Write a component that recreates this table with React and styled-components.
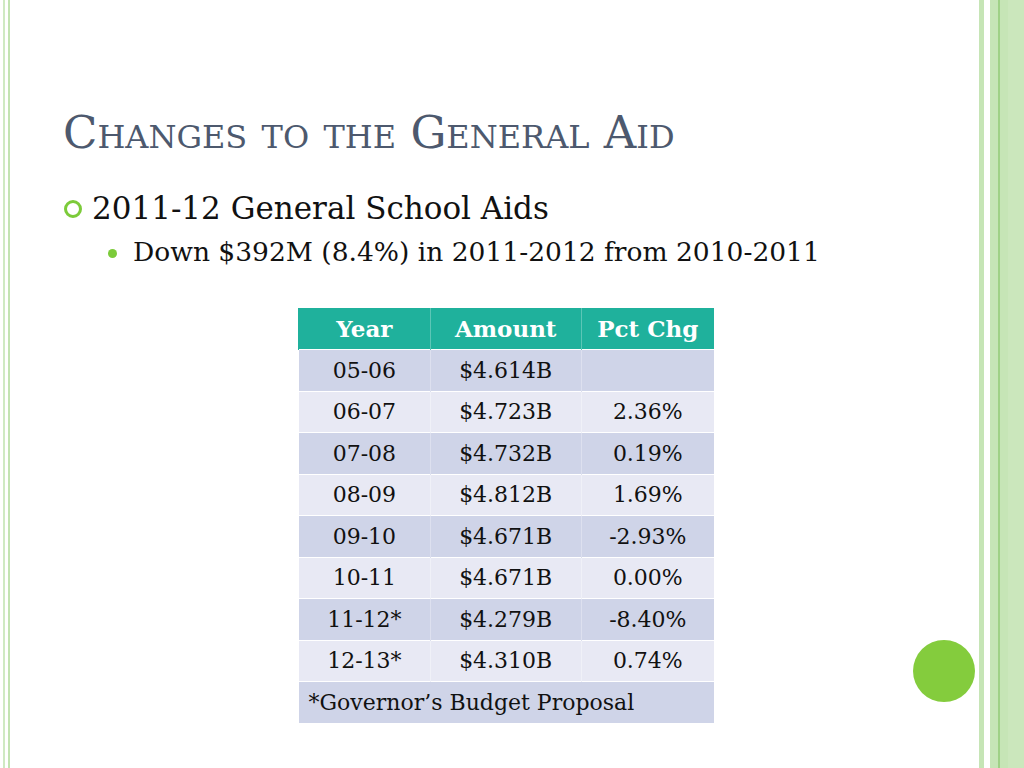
import React from 'react';
import styled, { createGlobalStyle } from 'styled-components';

const GlobalStyle = createGlobalStyle`
  html, body {
    margin: 0;
    padding: 0;
    background: #fff;
  }
  #root {
    width: 1024px;
    height: 768px;
  }
`

const Slide = styled.div`
  position: relative;
  display: flex;
  width: 1024px;
  height: 768px;
  overflow: hidden;
  background: #fff;
  font-family: "DejaVu Serif", "Liberation Serif", serif;
`
const LeftRail = styled.div`
  width: 7px;
  margin-left: 3px;
  border-left: 2px solid #cfe9c2;
  border-right: 2px solid #c3e3b2;
  box-sizing: border-box;
  flex-shrink: 0;
`
const Body = styled.div`
  flex: 1;
  display: flex;
  flex-direction: column;
  padding-left: 53px;
`
const RightRail = styled.div`
  display: flex;
  flex-shrink: 0;
`
const ThinStripe = styled.div`
  width: 5px;
  background: #c6e5b6;
  margin-right: 6px;
`
const WideStripe = styled.div`
  width: 34px;
  display: flex;
  background: #c6e5b6;
`
const Stripe = styled.div`
  width: ${p => p.w}px;
  background: ${p => p.c};
`

const Title = styled.h1`
  margin: 109px 0 0 0;
  font-weight: normal;
  font-variant: small-caps;
  font-size: 45px;
  line-height: 48px;
  color: #4d596e;
  letter-spacing: 0;
`
const Bullets = styled.ul`
  list-style: none;
  margin: 31px 0 0 0;
  padding: 0;
`
const Item = styled.li`
  display: flex;
  align-items: center;
  font-size: ${p => p.level === 1 ? 31 : 26.5}px;
  line-height: ${p => p.level === 1 ? 40 : 38}px;
  color: #111;
  margin-left: ${p => p.level === 1 ? 0 : 40}px;
  margin-top: ${p => p.level === 1 ? 0 : 5}px;
`
const Ring = styled.span`
  width: 12px;
  height: 12px;
  border: 3px solid #7ccb3a;
  border-radius: 50%;
  margin: 2px 10px 0 1px;
  flex-shrink: 0;
`
const Dot = styled.span`
  width: 9px;
  height: 9px;
  background: #7ccb3a;
  border-radius: 50%;
  margin: 2px 16px 0 5px;
  flex-shrink: 0;
`

const Table = styled.table`
  border-collapse: collapse;
  margin: 37px 0 0 235px;
  width: 416px;
  font-size: 22px;
  color: #111;
`
const HeadCell = styled.th`
  background: #1fb19c;
  color: #fff;
  font-weight: bold;
  font-size: 23px;
  height: 41px;
  padding: 0;
  text-align: center;
  border-left: 1px solid ${p => p.first ? '#1fb19c' : '#5cc6b6'};
`
const Cell = styled.td`
  height: 40.5px;
  padding: 0;
  text-align: center;
  background: ${p => p.alt ? '#e8e9f4' : '#cfd4e8'};
  border-top: 1px solid #fff;
  border-left: 1px solid ${p => p.first ? 'transparent' : (p.alt ? '#f0f1f8' : '#dde0ef')};
`
const NoteCell = styled.td`
  height: 40.5px;
  padding: 0 0 0 10px;
  text-align: left;
  background: #cfd4e8;
  border-top: 1px solid #fff;
`

const Circle = styled.div`
  position: absolute;
  left: 913px;
  top: 640px;
  width: 62px;
  height: 62px;
  border-radius: 50%;
  background: #84cc3d;
`

const rows = [
  ['05-06', '$4.614B', ''],
  ['06-07', '$4.723B', '2.36%'],
  ['07-08', '$4.732B', '0.19%'],
  ['08-09', '$4.812B', '1.69%'],
  ['09-10', '$4.671B', '-2.93%'],
  ['10-11', '$4.671B', '0.00%'],
  ['11-12*', '$4.279B', '-8.40%'],
  ['12-13*', '$4.310B', '0.74%'],
];

export default function App() {
  return (
    <Slide>
      <GlobalStyle />
      <LeftRail />
      <Body>
        <Title>Changes to the General Aid</Title>
        <Bullets>
          <Item level={1}><Ring />2011-12 General School Aids</Item>
          <Item level={2}><Dot />Down $392M (8.4%) in 2011-2012 from 2010-2011</Item>
        </Bullets>
        <Table>
          <colgroup>
            <col style={{ width: 132 }} />
            <col style={{ width: 151 }} />
            <col style={{ width: 133 }} />
          </colgroup>
          <thead>
            <tr>
              <HeadCell first>Year</HeadCell>
              <HeadCell>Amount</HeadCell>
              <HeadCell>Pct Chg</HeadCell>
            </tr>
          </thead>
          <tbody>
            {rows.map((r, i) => (
              <tr key={r[0]}>
                <Cell first alt={i % 2 === 1}>{r[0]}</Cell>
                <Cell alt={i % 2 === 1}>{r[1]}</Cell>
                <Cell alt={i % 2 === 1}>{r[2]}</Cell>
              </tr>
            ))}
            <tr>
              <NoteCell colSpan={3}>*Governor’s Budget Proposal</NoteCell>
            </tr>
          </tbody>
        </Table>
      </Body>
      <RightRail>
        <ThinStripe />
        <WideStripe>
          <Stripe w={8} c="#c6e5b6" />
          <Stripe w={2} c="#9fd186" />
          <Stripe w={8} c="#c6e5b6" />
          <Stripe w={16} c="#cbe7bc" />
        </WideStripe>
      </RightRail>
      <Circle />
    </Slide>
  );
}
